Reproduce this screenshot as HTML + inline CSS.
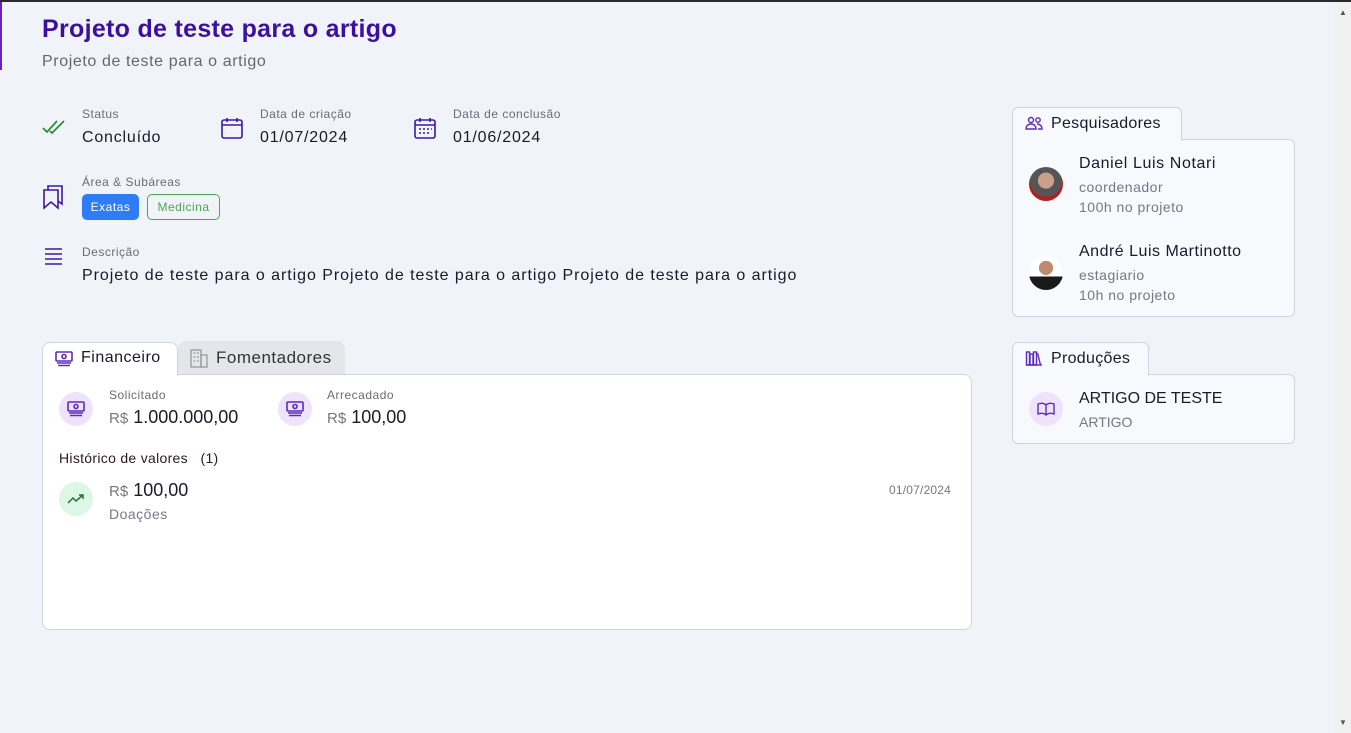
<!DOCTYPE html>
<html><head><meta charset="utf-8"><style>
*{box-sizing:border-box;margin:0;padding:0}
body{width:1351px;height:733px;background:#f0f3f8;font-family:"Liberation Sans",sans-serif;position:relative;overflow:hidden;color:#1a1a2a;letter-spacing:0.5px}
.a{position:absolute;white-space:nowrap}
.lbl{font-size:12px;color:#6b6b78}
.val{font-size:16px;color:#1a1a2a;letter-spacing:0.8px}
.gray{color:#777785}
.circ{position:absolute;width:34px;height:34px;border-radius:50%;background:#efe3fb;display:flex;align-items:center;justify-content:center}
</style></head><body>
<div class="a" style="left:0;top:0;width:1351px;height:2px;background:#2a2a2e"></div>
<div class="a" style="left:0;top:2px;width:2px;height:68px;background:#6a1fc0"></div>
<div class="a" style="left:1335px;top:2px;width:16px;height:731px;background:#f1f1f1"></div>
<div class="a" style="left:1339px;top:8px;font-size:8px;color:#555">▲</div>
<div class="a" style="left:1339px;top:718px;font-size:8px;color:#555">▼</div>

<div class="a" style="left:42px;top:15px;font-size:25px;font-weight:bold;color:#3b0fa0;letter-spacing:0.3px">Projeto de teste para o artigo</div>
<div class="a" style="left:42px;top:53px;font-size:16px;color:#666672;letter-spacing:0.6px">Projeto de teste para o artigo</div>

<svg class="a" style="left:42px;top:118px" width="24" height="18" viewBox="0 0 24 18" fill="none" stroke="#2e8b3a" stroke-width="1.8"><path d="M1 10l4 4L15 3M8 13l2 2L22 3"/></svg>
<div class="a lbl" style="left:82px;top:107px">Status</div>
<div class="a val" style="left:82px;top:129px">Concluído</div>

<svg class="a" style="left:220px;top:116px" width="24" height="24" viewBox="0 0 24 24" fill="none" stroke="#3b1aa0" stroke-width="1.6"><rect x="2" y="4" width="20" height="18" rx="2"/><path d="M2 9h20M7 2v4M17 2v4"/></svg>
<div class="a lbl" style="left:260px;top:107px">Data de criação</div>
<div class="a val" style="left:260px;top:129px">01/07/2024</div>

<svg class="a" style="left:413px;top:116px" width="24" height="24" viewBox="0 0 24 24" fill="none" stroke="#3b1aa0" stroke-width="1.6"><rect x="2" y="4" width="20" height="18" rx="2"/><path d="M2 9h20M7 2v4M17 2v4M6 13h2M10 13h2M14 13h2M18 13h1M6 17h2M10 17h2M14 17h2"/></svg>
<div class="a lbl" style="left:453px;top:107px">Data de conclusão</div>
<div class="a val" style="left:453px;top:129px">01/06/2024</div>

<svg class="a" style="left:42px;top:184px" width="24" height="26" viewBox="0 0 24 26" fill="none" stroke="#3b1aa0" stroke-width="1.6"><path d="M2 6h14v18l-7-6-7 6z"/><path d="M6 6V2h14v18l-4-3"/></svg>
<div class="a lbl" style="left:82px;top:175px">Área &amp; Subáreas</div>
<div class="a" style="left:82px;top:194px;width:57px;height:26px;border-radius:5px;background:#2f7df6;color:#fff;font-size:12px;text-align:center;line-height:26px">Exatas</div>
<div class="a" style="left:147px;top:194px;width:73px;height:26px;border-radius:5px;border:1px solid #4ca64f;color:#4ca64f;font-size:12px;text-align:center;line-height:24px">Medicina</div>

<svg class="a" style="left:44px;top:247px" width="20" height="18" viewBox="0 0 20 18" stroke="#3b1aa0" stroke-width="1.6"><path d="M1 2h17M1 7h17M1 12h17M1 17h17"/></svg>
<div class="a lbl" style="left:82px;top:245px">Descrição</div>
<div class="a val" style="left:82px;top:267px;letter-spacing:0.95px">Projeto de teste para o artigo Projeto de teste para o artigo Projeto de teste para o artigo</div>

<!-- tabs -->
<div class="a" style="left:178px;top:341px;width:167px;height:34px;background:#e4e6ea;border-radius:8px 8px 0 0"></div>
<div class="a" style="left:42px;top:374px;width:930px;height:256px;background:#fff;border:1px solid #cfd5e0;border-radius:0 8px 8px 8px"></div>
<div class="a" style="left:42px;top:342px;width:136px;height:34px;background:#fff;border:1px solid #cfd5e0;border-bottom:none;border-radius:8px 8px 0 0"></div>
<svg class="a" style="left:55px;top:351px" width="18" height="16" viewBox="0 0 18 16" fill="none" stroke="#5b2bc0" stroke-width="1.6"><rect x="1" y="1" width="16" height="9" rx="1"/><circle cx="9" cy="5.5" r="2"/><path d="M2 12h14M3 14.5h12"/></svg>
<div class="a" style="left:81px;top:349px;font-size:16px">Financeiro</div>
<svg class="a" style="left:190px;top:348px" width="18" height="20" viewBox="0 0 18 20" fill="none" stroke="#999" stroke-width="1.3"><rect x="1" y="2" width="10" height="17"/><rect x="11" y="7" width="6" height="12"/><path d="M3.5 5h2M7 5h2M3.5 9h2M7 9h2M3.5 13h2M7 13h2"/></svg>
<div class="a" style="left:216px;top:348px;font-size:17px;color:#333">Fomentadores</div>

<div class="circ" style="left:59px;top:392px"><svg width="18" height="16" viewBox="0 0 18 16" fill="none" stroke="#5b2bc0" stroke-width="1.6"><rect x="1" y="1" width="16" height="9" rx="1"/><circle cx="9" cy="5.5" r="2"/><path d="M2 12h14M3 14.5h12"/></svg></div>
<div class="a lbl" style="left:109px;top:388px">Solicitado</div>
<div class="a" style="left:109px;top:407px;font-size:18px;letter-spacing:0"><span style="font-size:15px;color:#777">R$</span> 1.000.000,00</div>
<div class="circ" style="left:278px;top:392px"><svg width="18" height="16" viewBox="0 0 18 16" fill="none" stroke="#5b2bc0" stroke-width="1.6"><rect x="1" y="1" width="16" height="9" rx="1"/><circle cx="9" cy="5.5" r="2"/><path d="M2 12h14M3 14.5h12"/></svg></div>
<div class="a lbl" style="left:327px;top:388px">Arrecadado</div>
<div class="a" style="left:327px;top:407px;font-size:18px;letter-spacing:0"><span style="font-size:15px;color:#777">R$</span> 100,00</div>

<div class="a" style="left:59px;top:450px;font-size:14px;color:#2a1a1a;letter-spacing:0.3px">Histórico de valores &nbsp; (1)</div>
<div class="circ" style="left:59px;top:482px;background:#dcf7e4"><svg width="18" height="12" viewBox="0 0 18 12" fill="none" stroke="#2e6b3a" stroke-width="1.5"><path d="M1 10l5-5 3 3 7-6M12 2h4v4"/></svg></div>
<div class="a" style="left:109px;top:480px;font-size:18px;letter-spacing:0"><span style="font-size:15px;color:#777">R$</span> 100,00</div>
<div class="a gray" style="left:109px;top:506px;font-size:14px">Doações</div>
<div class="a gray" style="left:889px;top:483px;font-size:12px;letter-spacing:0.2px">01/07/2024</div>

<!-- right -->
<div class="a" style="left:1012px;top:139px;width:283px;height:178px;background:#f7f9fc;border:1px solid #cfd5e0;border-radius:0 6px 6px 6px"></div>
<div class="a" style="left:1012px;top:107px;width:170px;height:34px;background:#f7f9fc;border:1px solid #cfd5e0;border-bottom:none;border-radius:6px 6px 0 0"></div>
<svg class="a" style="left:1025px;top:116px" width="18" height="14" viewBox="0 0 18 14" fill="none" stroke="#5b2bc0" stroke-width="1.4"><circle cx="6" cy="4" r="2.5"/><circle cx="13" cy="4" r="2.2"/><path d="M1 13c0-3 2-5 5-5s5 2 5 5zM12 8c3 0 5 2 5 5h-4"/></svg>
<div class="a" style="left:1051px;top:115px;font-size:16px;letter-spacing:0.3px">Pesquisadores</div>
<div class="a" style="left:1029px;top:167px;width:34px;height:34px;border-radius:50%;background:radial-gradient(circle at 50% 40%,#c9a08a 0 30%,#555 31% 60%,#b02020 61%)"></div>
<div class="a" style="left:1079px;top:155px;font-size:16px;letter-spacing:0.6px">Daniel Luis Notari</div>
<div class="a gray" style="left:1079px;top:179px;font-size:14px">coordenador</div>
<div class="a gray" style="left:1079px;top:199px;font-size:14px">100h no projeto</div>
<div class="a" style="left:1029px;top:256px;width:34px;height:34px;border-radius:50%;background:radial-gradient(circle at 50% 35%,#c08a70 0 25%,transparent 26%),linear-gradient(#fff 0 60%,#1a1a1a 61%)"></div>
<div class="a" style="left:1079px;top:243px;font-size:16px;letter-spacing:0.5px">André Luis Martinotto</div>
<div class="a gray" style="left:1079px;top:267px;font-size:14px">estagiario</div>
<div class="a gray" style="left:1079px;top:287px;font-size:14px">10h no projeto</div>

<div class="a" style="left:1012px;top:374px;width:283px;height:70px;background:#f7f9fc;border:1px solid #cfd5e0;border-radius:0 6px 6px 6px"></div>
<div class="a" style="left:1012px;top:342px;width:137px;height:34px;background:#f7f9fc;border:1px solid #cfd5e0;border-bottom:none;border-radius:6px 6px 0 0"></div>
<svg class="a" style="left:1025px;top:350px" width="18" height="16" viewBox="0 0 18 16" fill="none" stroke="#5b2bc0" stroke-width="1.4"><path d="M1 15h16"/><rect x="1.5" y="2" width="3" height="13"/><rect x="5" y="4" width="3" height="11"/><rect x="8.5" y="2" width="3" height="13"/><path d="M12.5 3l3 12"/></svg>
<div class="a" style="left:1051px;top:350px;font-size:16px;letter-spacing:0.3px">Produções</div>
<div class="circ" style="left:1029px;top:392px"><svg width="18" height="14" viewBox="0 0 18 14" fill="none" stroke="#5b2bc0" stroke-width="1.4"><path d="M9 3v10M9 3C7 1 4 1 1 2v10c3-1 6-1 8 1 2-2 5-2 8-1V2c-3-1-6-1-8 1z"/></svg></div>
<div class="a" style="left:1079px;top:390px;font-size:16px;letter-spacing:0">ARTIGO DE TESTE</div>
<div class="a gray" style="left:1079px;top:414px;font-size:14px;letter-spacing:0">ARTIGO</div>
</body></html>
